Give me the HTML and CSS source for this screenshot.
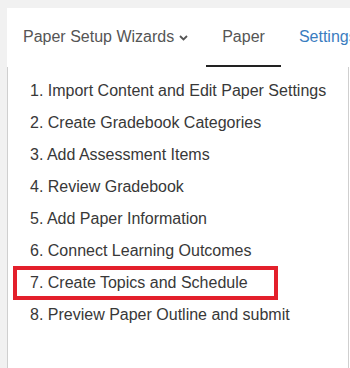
FILE: index.html
```html
<!DOCTYPE html>
<html lang="en">
<head>
  <meta charset="UTF-8">
  <title>Paper Setup</title>
  <link rel="stylesheet" href="styles.css">
</head>
<body>

  <div class="page">
    <nav class="tabs">
      <a class="tab">Paper Setup Wizards
        <svg class="caret" width="9" height="6" viewBox="0 0 9 6"><path d="M1 1 L4.5 4.5 L8 1" fill="none" stroke="#555" stroke-width="1.8"/></svg>
      </a>
      <a class="tab active">Paper</a>
      <a class="tab link">Settings</a>
    </nav>

    <ul class="wizard-menu">
      <li>1. Import Content and Edit Paper Settings</li>
      <li>2. Create Gradebook Categories</li>
      <li>3. Add Assessment Items</li>
      <li>4. Review Gradebook</li>
      <li>5. Add Paper Information</li>
      <li>6. Connect Learning Outcomes</li>
      <li class="marked">7. Create Topics and Schedule<span class="highlight"></span></li>
      <li>8. Preview Paper Outline and submit</li>
    </ul>
  </div>

</body>
</html>
```

FILE: styles.css
```css
body {
  margin: 0;
  background-color: #f1f1f1;
  font-family: "Liberation Sans", Arial, sans-serif;
  overflow: hidden;
}
.page {
  margin: 8px 0 0 7px;
  background-color: white;
  height: 360px;
  overflow: hidden;
}
.tabs {
  display: flex;
  gap: 2px;
  white-space: nowrap;
  overflow: hidden;
}
.tab {
  display: flex;
  align-items: center;
  padding: 19px 16px 18px;
  line-height: 20px;
  font-size: 16px;
  color: #555;
  border-bottom: 2px solid transparent;
}
.tab.active {
  border-bottom-color: #222;
}
.tab.link {
  color: #3a7dbf;
}
.caret {
  margin-left: 5px;
  margin-top: 1px;
}
.wizard-menu {
  list-style: none;
  margin: 0;
  padding: 8px 0 0;
  width: 340px;
  height: 293px;
  border: 1px solid #cfcfcf;
  border-top: none;
  border-bottom: none;
}
.wizard-menu li {
  position: relative;
  padding-left: 22px;
  line-height: 32px;
  font-size: 16px;
  color: #383838;
}
.highlight {
  position: absolute;
  top: -1px;
  left: 5px;
  width: 257px;
  height: 26px;
  border: 4px solid #e3202b;
}
```
